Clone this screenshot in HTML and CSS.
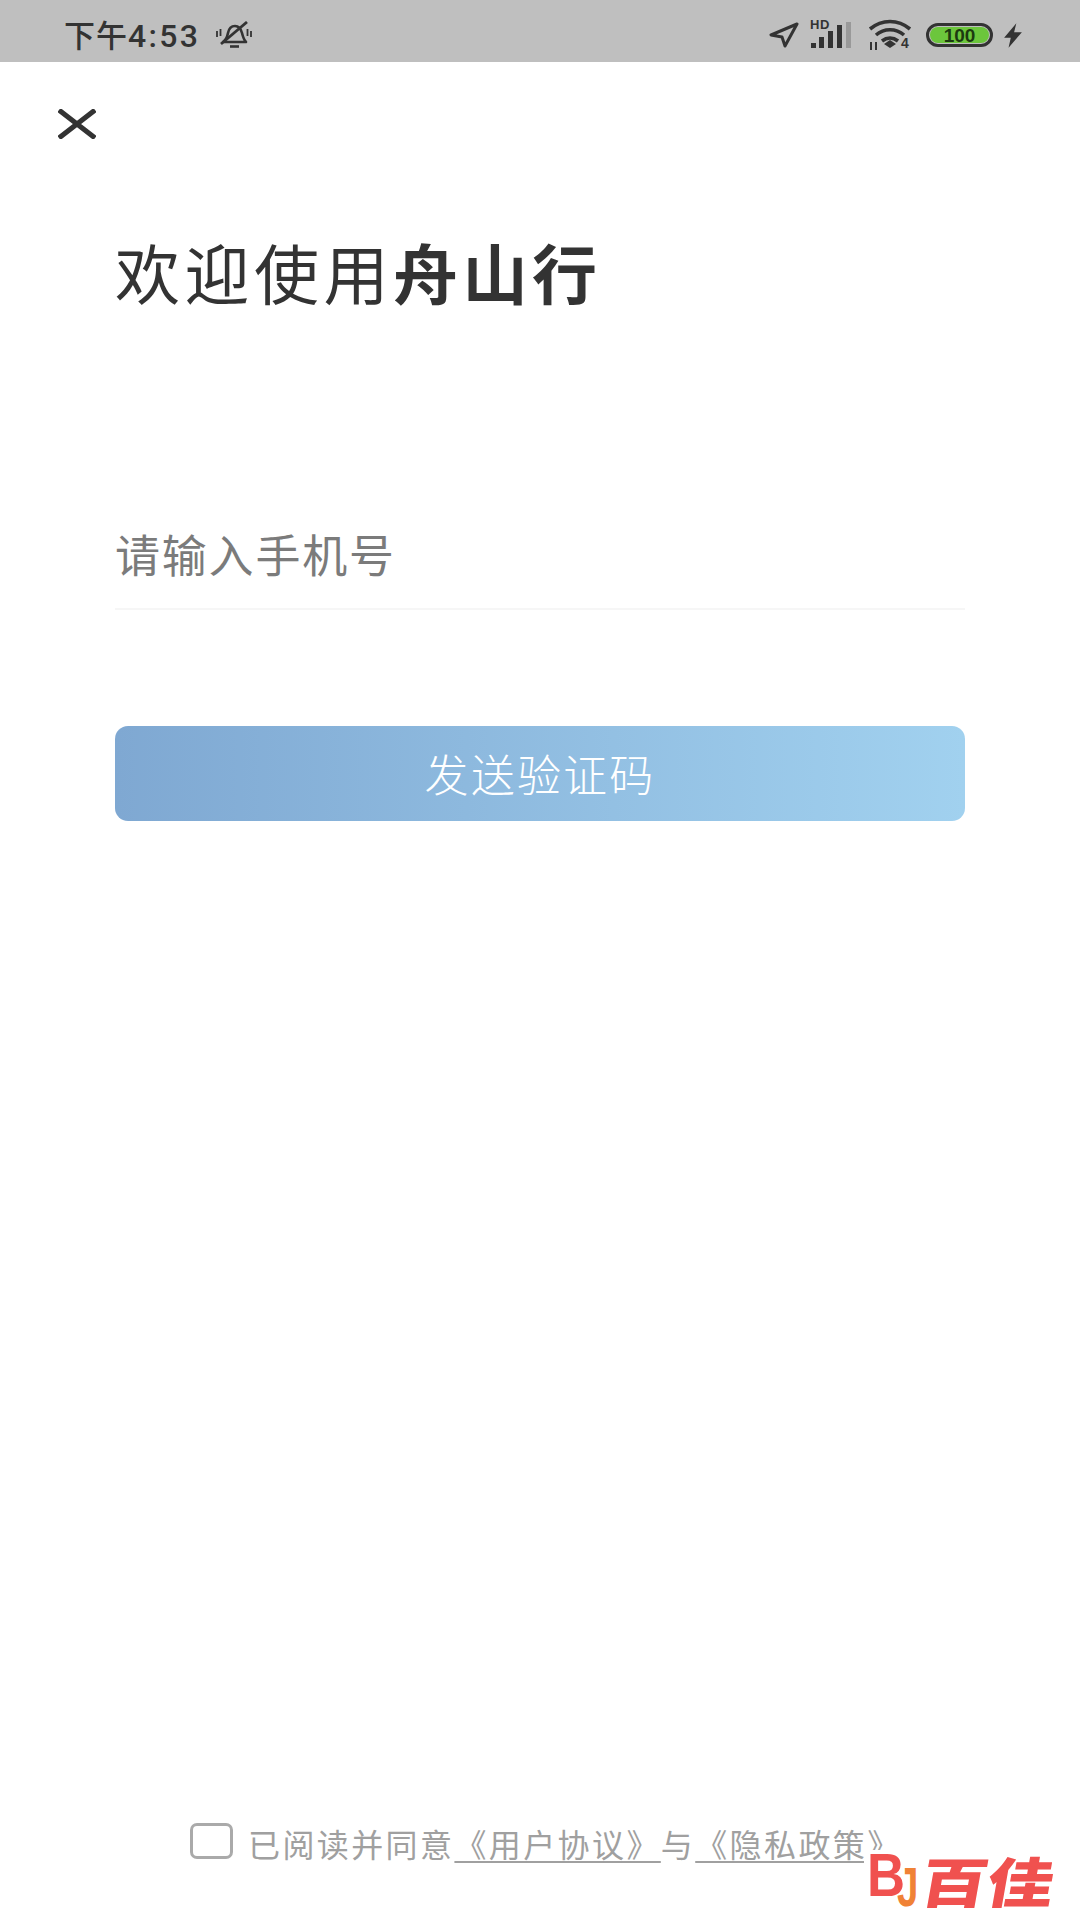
FILE: index.html
```html
<!DOCTYPE html>
<html lang="zh-CN">
<head>
<meta charset="utf-8">
<title>欢迎使用舟山行</title>
<link rel="stylesheet" href="styles.css">
</head>
<body>
<main class="screen">
  <header class="status">
    <div class="status-left">
      <span class="time"><span class="time-cjk">下午</span>4:53</span>
      <svg class="ic-bell" viewBox="0 0 36 28" width="36" height="28"><path d="M7 21c3-2 4-4 5-9 1-5 3-7 7-7 4 0 6 3 7 7 1 4 2 7 4 9z" fill="none" stroke="#333" stroke-width="2.6" stroke-linejoin="round"/><path d="M14 25.5h9" stroke="#333" stroke-width="2.6"/><path d="M5 23 31 1" stroke="#333" stroke-width="2.8"/><path d="M1 10v6M4.500 8v7M31.500 8v7M35 10v6" stroke="#333" stroke-width="1.800"/></svg>
    </div>
    <div class="status-right">
      <svg viewBox="0 0 30 26" width="30" height="26"><path d="M28 2 2 13l11 2 3 9z" fill="none" stroke="#333" stroke-width="3" stroke-linejoin="round"/></svg>
      <div class="signal">
        <span class="hd">HD</span>
        <svg viewBox="0 0 41 26" width="41" height="26"><path d="M1 21h5v5H1zM9 15h5v11H9zM18 9h5v17h-5zM27 3h5v23h-5z" fill="#333"/><path d="M36 0h5v26h-5z" fill="#999"/></svg>
      </div>
      <svg class="ic-wifi" viewBox="0 0 45 34" width="45" height="34"><path d="M2 11c12-10 28-10 40 0M8 17c8-7 20-7 28 0M14 23c5-4 11-4 16 0" fill="none" stroke="#333" stroke-width="3.6"/><path d="m16 26 6-4 6 4-6 4z" fill="#333"/><path d="M3 24v8M8 24v8" stroke="#333" stroke-width="2"/><text x="33" y="30" class="wifi-4">4</text></svg>
      <div class="battery"><span class="level">100</span></div>
      <svg class="ic-bolt" viewBox="0 0 18 22" width="20" height="25"><path d="M12 0 1 13h6l-2 9L17 8h-7z" fill="#333"/></svg>
    </div>
  </header>

  <button class="close" type="button" aria-label="关闭">
    <svg viewBox="0 0 38 30" width="38" height="30"><path d="M1 1 37 29M37 1 1 29" stroke="#333" stroke-width="5" fill="none"/></svg>
  </button>

  <section class="content">
    <h1 class="title">欢迎使用<strong>舟山行</strong></h1>
    <div class="phone">请输入手机号</div>
    <div class="send">发送验证码</div>
  </section>

  <footer class="agree">
    <span class="check"></span>
    <p class="agree-text">已阅读并同意<a class="link">《用户协议》</a>与<a class="link">《隐私政策》</a></p>
  </footer>

  <div class="mark">
    <span class="mark-b">B</span><span class="mark-j">J</span><span class="mark-name">百佳</span>
  </div>
</main>
</body>
</html>
```
FILE: styles.css
```css
* { box-sizing: border-box; }
html, body { margin: 0; padding: 0; }
body { background: #fff; font-family: "Noto Sans CJK SC", "Liberation Sans", sans-serif; color: #333; }
.screen { position: relative; width: 1080px; height: 1920px; display: flex; flex-direction: column; overflow: hidden; }

.status { height: 62px; background: #bfbfbf; display: flex; justify-content: space-between; align-items: center; padding: 8px 57px 0 64px; flex: none; }
.status-left { display: flex; align-items: center; gap: 16px; }
.time { font-family: Roboto, "Noto Sans CJK SC", sans-serif; font-size: 32px; line-height: 36px; font-weight: 500; letter-spacing: 2.300px; color: #333; }
.time-cjk { font-family: "Noto Sans CJK SC", sans-serif; font-size: 31px; letter-spacing: 1px; }
.ic-bell { display: block; }
.status-right { display: flex; align-items: center; gap: 14px; }
.status-right svg { display: block; }
.signal { position: relative; width: 41px; height: 26px; margin-left: -3px; margin-right: 1px; }
.signal svg { position: absolute; right: 0; bottom: 0; }
.hd { position: absolute; left: 0; top: -4px; font: bold 13px/14px "Liberation Sans", sans-serif; letter-spacing: 0.500px; color: #333; }
.ic-wifi { margin-left: 2px; }
.wifi-4 { font: bold 14px "Liberation Sans", sans-serif; fill: #333; }
.battery { width: 67px; height: 24px; border: 3px solid #333; border-radius: 12px; padding: 1px; margin-left: -1px; }
.level { display: flex; align-items: center; justify-content: center; height: 100%; background: #6cc63c; border-radius: 9px; font: bold 19px/1 "Liberation Sans", sans-serif; color: #1c3a10; }
.ic-bolt { margin-left: -4px; }

.close { appearance: none; border: 0; background: none; padding: 0; margin: 47px 0 0 58px; width: 38px; height: 30px; flex: none; }
.close svg { display: block; }

.content { padding: 0 115px; display: flex; flex-direction: column; }
.title { margin: 92px 0 0; font-size: 65px; line-height: 80px; font-weight: 400; letter-spacing: 4.500px; color: #333; white-space: nowrap; }
.title strong { font-weight: 700; }
.phone { margin-top: 215px; height: 84px; border-bottom: 2px solid #f6f6f6; font-size: 45px; line-height: 56px; letter-spacing: 1.800px; color: #7b7b7b; }
.send { margin-top: 116px; height: 95px; border-radius: 13px; background: linear-gradient(90deg, #7fa8d2, #a1d1ef); color: #fff; font-size: 44px; font-weight: 300; line-height: 95px; letter-spacing: 2.200px; text-align: center; }

.agree { margin-top: auto; margin-bottom: 57px; padding-left: 190px; display: flex; align-items: center; gap: 15px; }
.check { width: 43px; height: 36px; margin-bottom: 4px; border: 3px solid #aaa; border-radius: 7px; flex: none; }
.agree-text { margin: 0; font-size: 32px; line-height: 40px; letter-spacing: 2.400px; color: #a0a0a0; white-space: nowrap; }
.link { color: #a0a0a0; text-decoration: underline; text-underline-offset: 4px; text-decoration-thickness: 2px; }

.mark { position: absolute; left: 864px; top: 1850px; width: 196px; height: 62px; background: #fff; display: flex; align-items: flex-start; white-space: nowrap; }
.mark-b { font: 900 62px/50px "Liberation Sans", sans-serif; color: #f0514f; width: 30px; margin-left: 3px; transform: scaleX(0.85); transform-origin: left; }
.mark-j { font: 900 55px/55px "Liberation Sans", sans-serif; color: #f08236; margin-top: 10px; width: 25px; transform: scaleX(0.7); transform-origin: left; }
.mark-name { margin-top: 3px; font-size: 54px; line-height: 54px; font-weight: 900; color: #f0514f; transform: skewX(-10deg) scaleX(1.23); transform-origin: left; }
```
